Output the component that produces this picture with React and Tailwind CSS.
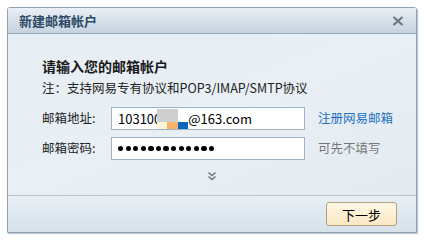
export default function App() {
  const font = { fontFamily: '"Noto Sans CJK SC", "Noto Sans", sans-serif' };
  return (
    <div className="w-[424px] h-[240px] bg-white pt-[7px] pl-[7px]" style={font}>
      <div className="w-[410px] h-[226px] border border-[#8fa3b5] rounded-t-[3px] flex flex-col shadow-[1px_1px_1px_rgba(100,120,140,0.5)]">
        <div className="h-[26px] flex items-center justify-between px-[11px] bg-gradient-to-b from-[#e9eff5] to-[#c5d3df] border-b border-[#94a8ba]">
          <span className="text-[13px] font-bold text-[#2e4a66] leading-none">新建邮箱帐户</span>
          <svg width="12" height="10" viewBox="0 0 12 10" className="mr-[1px]">
            <path d="M1.5 1 L10.5 9 M10.5 1 L1.5 9" stroke="#6b7785" strokeWidth="2.2" />
          </svg>
        </div>
        <div className="flex-1 bg-gradient-to-br from-[#e6eef3] via-[#e9f0f5] to-[#e2ebf1] pl-[34px] pt-[22px] flex flex-col">
          <div className="text-[14px] font-bold text-[#1a1a1a] leading-[20px]">请输入您的邮箱帐户</div>
          <div className="text-[12.5px] text-[#222] leading-[18px] mt-[3px]">注：支持网易专有协议和POP3/IMAP/SMTP协议</div>
          <div className="flex items-center mt-[10px] h-[23px]">
            <span className="w-[69px] text-[12.5px] text-[#222]">邮箱地址:</span>
            <div className="w-[194px] h-[23px] border border-[#9db3c8] bg-white flex items-center pl-[6px] text-[13px] text-black relative">
              <span>103100</span>
              <span className="flex flex-col w-[31px] h-[20px] mt-[1px] ml-[-4px]">
                <span className="flex h-[14px]"><span className="w-[21px] bg-[#cfcfcf]"></span></span>
                <span className="flex h-[7px]">
                  <span className="w-[10px] bg-[#fcf6d9]"></span>
                  <span className="w-[11px] bg-[#f7b36c]"></span>
                  <span className="w-[10px] bg-[#0a67bd]"></span>
                </span>
              </span>
              <span>@163.com</span>
            </div>
            <span className="ml-[13px] text-[12.5px] text-[#1f6fc5]">注册网易邮箱</span>
          </div>
          <div className="flex items-center mt-[7px] h-[23px]">
            <span className="w-[69px] text-[12.5px] text-[#222]">邮箱密码:</span>
            <div className="w-[194px] h-[23px] border border-[#9db3c8] bg-white flex items-center pl-[6px] gap-[2.4px]">
              {Array.from({ length: 13 }).map((_, i) => (
                <span key={i} className="w-[5.2px] h-[5.2px] rounded-full bg-black"></span>
              ))}
            </div>
            <span className="ml-[13px] text-[12.5px] text-[#777]">可先不填写</span>
          </div>
          <div className="flex justify-center mt-[11px] pr-[34px]">
            <svg width="10" height="10" viewBox="0 0 10 10" className="ml-[-1px]">
              <path d="M1.5 1.5 L5 4.5 L8.5 1.5 M1.5 5.5 L5 8.5 L8.5 5.5" stroke="#6a7480" strokeWidth="1.4" fill="none" />
            </svg>
          </div>
        </div>
        <div className="h-[37px] border-t border-[#b9c5cf] bg-gradient-to-b from-[#e8eff5] to-[#d7e2ea] flex items-center justify-end pr-[19px]">
          <button className="w-[71px] h-[24px] rounded-[3px] border border-[#b29f7c] bg-gradient-to-b from-[#fef7e6] to-[#fbe8c4] text-[13px] text-black leading-none">下一步</button>
        </div>
      </div>
    </div>
  );
}
